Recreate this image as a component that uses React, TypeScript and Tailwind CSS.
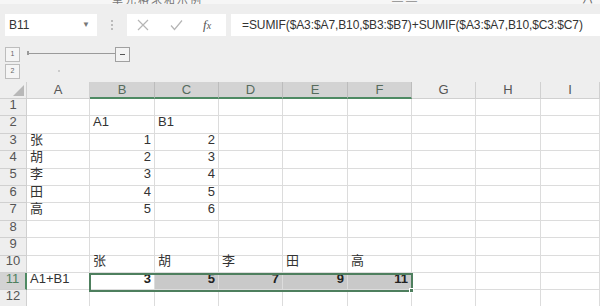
const cols = ['A', 'B', 'C', 'D', 'E', 'F', 'G', 'H', 'I'];
const selCols = ['B', 'C', 'D', 'E', 'F'];

type Cell = { t: string; right?: boolean; bold?: boolean };

const data: Record<number, Record<string, Cell>> = {
  2: { B: { t: 'A1' }, C: { t: 'B1' } },
  3: { A: { t: '张' }, B: { t: '1', right: true }, C: { t: '2', right: true } },
  4: { A: { t: '胡' }, B: { t: '2', right: true }, C: { t: '3', right: true } },
  5: { A: { t: '李' }, B: { t: '3', right: true }, C: { t: '4', right: true } },
  6: { A: { t: '田' }, B: { t: '4', right: true }, C: { t: '5', right: true } },
  7: { A: { t: '高' }, B: { t: '5', right: true }, C: { t: '6', right: true } },
  10: { B: { t: '张' }, C: { t: '胡' }, D: { t: '李' }, E: { t: '田' }, F: { t: '高' } },
  11: {
    A: { t: 'A1+B1' },
    B: { t: '3', right: true, bold: true },
    C: { t: '5', right: true, bold: true },
    D: { t: '7', right: true, bold: true },
    E: { t: '9', right: true, bold: true },
    F: { t: '11', right: true, bold: true },
  },
};

const rows = Array.from({ length: 12 }, (_, i) => i + 1);

function FormulaBar() {
  return (
    <div className="flex items-center h-[22px] mt-[14px]">
      <div className="ml-[5px] w-[92px] h-full bg-white flex items-center justify-between px-[4px] text-[12px] text-[#333]">
        <span>B11</span>
        <span className="text-[8px] text-[#777] mr-[3px]">▼</span>
      </div>
      <div className="w-[30px] flex flex-col items-center gap-[2px]">
        <span className="w-[2px] h-[2px] bg-[#aaa] rounded-full" />
        <span className="w-[2px] h-[2px] bg-[#aaa] rounded-full" />
        <span className="w-[2px] h-[2px] bg-[#aaa] rounded-full" />
      </div>
      <div className="w-[99px] h-full bg-white flex items-center">
        <svg width="12" height="12" viewBox="0 0 12 12" className="ml-[10px]">
          <path d="M1 1 L11 11 M11 1 L1 11" stroke="#b5b5b5" strokeWidth="1.2" fill="none" />
        </svg>
        <svg width="13" height="12" viewBox="0 0 13 12" className="ml-[21px]">
          <path d="M1 6.5 L4.5 10.5 L12 1.5" stroke="#b5b5b5" strokeWidth="1.2" fill="none" />
        </svg>
        <span className="ml-[20px] text-[13px] italic text-[#555] font-['Liberation_Serif',serif]">
          f<span className="text-[10px]">x</span>
        </span>
      </div>
      <div className="ml-[5px] flex-1 h-full bg-white flex items-center pl-[11px] text-[12px] tracking-[-0.1px] text-[#333] whitespace-nowrap overflow-hidden">
        =SUMIF($A3:$A7,B10,$B3:$B7)+SUMIF($A3:$A7,B10,$C3:$C7)
      </div>
    </div>
  );
}

function Outline() {
  return (
    <div className="h-[46px] relative">
      <div className="absolute left-[5px] top-[11px] w-[15px] h-[15px] border border-[#bdbdbd] bg-[#f5f5f5] flex items-center justify-center text-[7px] text-[#666]">1</div>
      <div className="absolute left-[5px] top-[28px] w-[15px] h-[15px] border border-[#bdbdbd] bg-[#f5f5f5] flex items-center justify-center text-[7px] text-[#666]">2</div>
      <div className="absolute left-[27px] top-[17px] w-[88px] h-[1px] bg-[#9a9a9a]" />
      <div className="absolute left-[27px] top-[15px] w-[2px] h-[4px] bg-[#9a9a9a]" />
      <div className="absolute left-[115px] top-[11px] w-[15px] h-[15px] border border-[#a0a0a0] bg-[#f3f3f3] flex items-center justify-center">
        <span className="w-[5px] h-[1px] bg-[#555]" />
      </div>
      <div className="absolute left-[58px] top-[34px] w-[2px] h-[2px] bg-[#ccc]" />
    </div>
  );
}

export default function App() {
  return (
    <div className="w-[600px] h-[306px] overflow-hidden bg-[#eeeeee] font-['Liberation_Sans','Noto_Sans_CJK_SC',sans-serif] relative">
      <div className="absolute top-0 left-0 right-0 h-[4px] overflow-hidden bg-[#f6f6f6]">
        <div className="absolute top-[-8px] left-[112px] text-[11px] text-[#777] tracking-[2px]">单元格求和示例</div>
        <div className="absolute top-[-8px] left-[392px] text-[11px] text-[#888]">— —</div>
        <div className="absolute top-[-8px] left-[582px] text-[11px] text-[#666]">ハ</div>
      </div>
      <FormulaBar />
      <Outline />
      <div className="relative grid grid-cols-[27px_63px_65px_64px_64px_65px_64px_64px_65px_1fr] grid-rows-[17px_repeat(12,17.4px)] text-[13px] text-[#333]">
        <div className="bg-[#eeeeee] border-r border-b border-[#d0d0d0] relative">
          <div className="absolute right-[2px] bottom-[2px] w-0 h-0 border-l-[11px] border-l-transparent border-b-[11px] border-b-[#b8b8b8]" />
        </div>
        {cols.map((c) => {
          const sel = selCols.includes(c);
          return (
            <div
              key={c}
              className={
                sel
                  ? 'bg-[#d3d3d3] border-r border-[#bcbcbc] border-b-2 border-b-[#4e8a63] flex items-center justify-center text-[#566b5d]'
                  : 'bg-[#eeeeee] border-r border-b border-[#d0d0d0] flex items-center justify-center text-[#555]'
              }
            >
              {c}
            </div>
          );
        })}
        {rows.map((r) => (
          <Row key={r} r={r} />
        ))}
        <div className="absolute left-[89px] top-[190.5px] w-[324px] h-[19px] border-2 border-[#4e7f5e] pointer-events-none" />
        <div className="absolute left-[409px] top-[206px] w-[5px] h-[5px] bg-[#4e7f5e] border border-white" />
      </div>
    </div>
  );
}

function Row({ r }: { r: number }) {
  const selRow = r === 11;
  return (
    <>
      <div
        className={
          selRow
            ? 'bg-[#d3d3d3] border-r-2 border-r-[#4e8a63] border-b border-[#d0d0d0] flex items-end justify-center pb-[1px] text-[#4e7f5e]'
            : 'bg-[#eeeeee] border-r border-b border-[#d0d0d0] flex items-end justify-center pb-[1px] text-[#555]'
        }
      >
        {r}
      </div>
      {cols.map((c) => {
        const cell = data[r]?.[c];
        const filled = selRow && selCols.includes(c) && c !== 'B';
        return (
          <div
            key={c}
            className={
              (filled ? 'bg-[#c9c9c9] ' : 'bg-white ') +
              'border-r border-b border-[#dcdcdc] flex items-end pb-[1px] px-[3px] overflow-visible whitespace-nowrap ' +
              (cell?.right ? 'justify-end ' : 'justify-start ') +
              (cell?.bold ? 'font-bold text-[#222]' : '')
            }
          >
            {cell?.t}
          </div>
        );
      })}
    </>
  );
}
